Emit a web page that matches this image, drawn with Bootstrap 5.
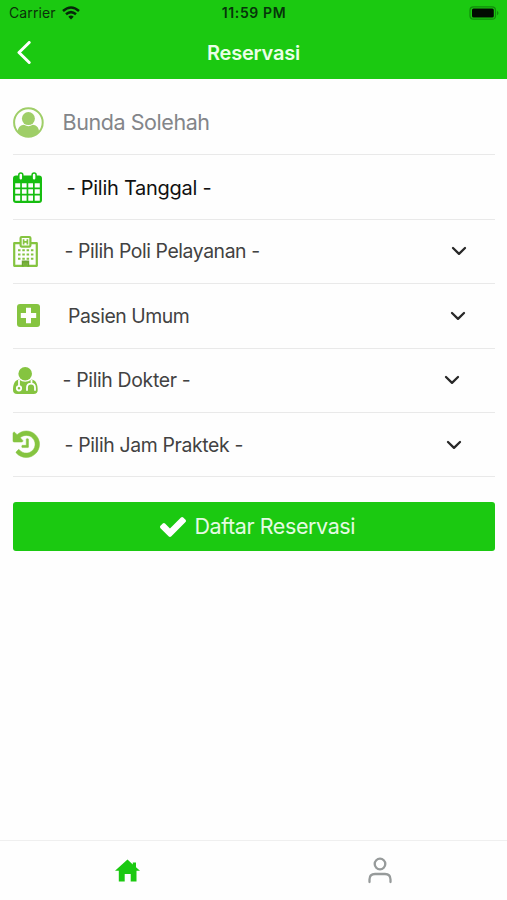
<!DOCTYPE html>
<html lang="id">
<head>
<meta charset="utf-8">
<meta name="viewport" content="width=device-width, initial-scale=1">
<title>Reservasi</title>
<link href="https://cdn.jsdelivr.net/npm/bootstrap@5.3.0/dist/css/bootstrap.min.css" rel="stylesheet">
<style>
:root{--brand:#1bc911;--leaf:#85c440}
body{font-family:Inter,"Liberation Sans",sans-serif;color:#424242;background:#fefefe;line-height:1.2}
svg{display:block;flex:none}
.app-head{background:var(--brand);height:79px}
.status{height:27px;padding:0 8px 1px 9px;font-size:14px;color:#0b300a}
.status>div{flex:1 1 0}
.carrier{letter-spacing:.1px}
.maker{gap:6px}
.clock{font-weight:600;color:#06350a;letter-spacing:.6px}
.title-bar{height:51px;padding:0 17px}
.title-bar>div{flex:1 1 0}
.title-bar h1{font-size:20px;font-weight:600;color:#eaffe8;letter-spacing:-.2px}
.form-rows{padding:12px 12.5px 0 13px}
.line{height:64.4px;border-bottom:1.5px solid #e9e9e9;font-size:19.4px}
.line>span{padding-top:1px}
.ico{width:var(--w)}
.w-a{--w:49.5px}.w-b{--w:53.5px}.w-c{--w:51.5px}.w-d{--w:55px}
.ico svg{overflow:visible}
.name{font-size:21.5px;color:#838589;letter-spacing:-.43px}
.date{font-size:20px;color:#111;letter-spacing:-.27px}
.t1{letter-spacing:-.42px}.t2{letter-spacing:-.45px}.t3{letter-spacing:-.33px}.t4{letter-spacing:-.35px}
.e1{margin-right:27.5px}.e2{margin-right:28.5px}.e3{margin-right:35px}.e4{margin-right:32.5px}
.send{height:48.5px;margin-top:25px;background:var(--brand);color:#e4fbe2;font-size:21.5px;letter-spacing:-.4px;border-radius:3px;border:0;padding:0 0 0 8px;gap:8px}
.send:hover{background:var(--brand);color:#e4fbe2}
.tabs{height:60px;border-top:1px solid #efefef}
</style>
<script src="https://cdn.jsdelivr.net/npm/bootstrap@5.3.0/dist/js/bootstrap.bundle.min.js"></script>
</head>
<body class="d-flex flex-column vh-100 overflow-hidden">
<header class="app-head">
  <div class="status d-flex align-items-center">
    <div class="maker d-flex align-items-center"><span class="carrier">Carrier</span>
      <svg class="wifi" width="18" height="14" viewBox="0 0 18 14" fill="none" stroke="#06280a" stroke-width="2.5"><path d="M1 5Q9-2 17 5M4 8.3Q9 4 14 8.3"/><path d="M6.3 10.7Q9 8.4 11.7 10.7L9 13.6Z" fill="#06280a" stroke="none"/></svg>
    </div>
    <span class="clock">11:59 PM</span>
    <div class="d-flex justify-content-end"><svg width="30" height="14" viewBox="0 0 30 14"><rect x="1" y=".8" width="25.5" height="12.4" rx="3.5" fill="none" stroke="#128b0b" stroke-width="1.2"/><rect x="3" y="2.6" width="21.8" height="8.8" rx="1.5" fill="#020a02"/><path d="M28 4.7Q31 7 28 9.3Z" fill="#128b0b"/></svg></div>
  </div>
  <div class="title-bar d-flex align-items-center">
    <div><svg width="15" height="24" viewBox="0 0 15 24" fill="none" stroke="#fff" stroke-width="3" stroke-linecap="round" stroke-linejoin="round"><path d="M12.2 1.500L2 11.500L12.200 21.500"/></svg></div>
    <h1 class="m-0">Reservasi</h1>
    <div></div>
  </div>
</header>
<main class="form-rows flex-grow-1">
  <div class="line d-flex align-items-center">
    <div class="ico w-a"><svg width="31" height="31" viewBox="0 0 31 31"><circle cx="15.4" cy="15.5" r="14.3" fill="none" stroke="#9fce68" stroke-width="2"/><g fill="#9fce68"><circle cx="15.4" cy="11.6" r="6.5"/><path d="M4.7 24.5C5.2 19.6 8 18.3 11 17.8Q15.4 20.6 19.8 17.8C22.8 18.3 25.6 19.6 26.1 24.5Q22 30 15.4 30T4.7 24.5Z"/></g></svg></div>
    <span class="name">Bunda Solehah</span>
  </div>
  <div class="line d-flex align-items-center">
    <div class="ico w-b"><svg width="29" height="31" viewBox="0 0 29 31"><path d="M3 3.5H26Q29 3.5 29 6.5V28Q29 31 26 31H3Q0 31 0 28V6.5Q0 3.5 3 3.5Z" fill="#16bd10"/><path d="M2.2 11.2H7.2V15.4H2.2ZM8.9 11.2H13.6V15.4H8.9ZM15.3 11.2H20V15.4H15.3ZM21.7 11.2H26.8V15.4H21.7ZM2.2 17.2H7.2V21.8H2.2ZM8.9 17.2H13.6V21.8H8.9ZM15.3 17.2H20V21.8H15.3ZM21.7 17.2H26.8V21.8H21.7ZM2.2 23.6H7.2V28.7H2.2ZM8.9 23.6H13.6V28.7H8.9ZM15.3 23.6H20V28.7H15.3ZM21.7 23.6H26.8V28.7H21.7Z" fill="#fefefe"/><g fill="#fefefe" stroke="#16bd10" stroke-width="1.5"><rect x="5.8" y=".9" width="4" height="7.3" rx="2"/><rect x="19.1" y=".9" width="4" height="7.3" rx="2"/></g></svg></div>
    <span class="date">- Pilih Tanggal -</span>
  </div>
  <div class="line d-flex align-items-center">
    <div class="ico w-c"><svg width="25" height="31" viewBox="0 0 25 31"><g fill="none" stroke="#85c440" stroke-width="2.2"><path d="M7 7.2H1.2V29.8H23.8V7.2H18" stroke-linejoin="round"/><rect x="7.6" y="1" width="9.8" height="9.6" rx="1"/><path d="M10.6 3.2V8.4M14.4 3.2V8.4M10.6 5.8H14.4" stroke-width="1.7"/><path d="M5 14.3H20.5M5 18.5H20.5M5 22.7H20.5" stroke-width="1.9" stroke-dasharray="2.5 1.8"/></g><path d="M8.8 24.4H16.2V30.5H14.3V27.5H10.7V30.5H8.8Z" fill="#6da534"/><path d="M10.4 26.5H14.6V30H10.4Z" fill="#78b33a"/></svg></div>
    <span class="t1">- Pilih Poli Pelayanan -</span>
    <svg class="e1 ms-auto" width="16" height="10" viewBox="0 0 16 10" fill="none" stroke="#282828" stroke-width="2.3" stroke-linecap="round" stroke-linejoin="round"><path d="M2 2L8 7.8L14 2"/></svg>
  </div>
  <div class="line d-flex align-items-center">
    <div class="ico w-d ps-1"><svg width="23" height="23" viewBox="0 0 23 23"><rect width="23" height="23" rx="3" fill="#85c440"/><path d="M9 3.8H14V9H19.2V14H14V19.2H9V14H3.8V9H9Z" fill="#fefefe"/></svg></div>
    <span class="t2">Pasien Umum</span>
    <svg class="e2 ms-auto" width="16" height="10" viewBox="0 0 16 10" fill="none" stroke="#282828" stroke-width="2.3" stroke-linecap="round" stroke-linejoin="round"><path d="M2 2L8 7.8L14 2"/></svg>
  </div>
  <div class="line d-flex align-items-center">
    <div class="ico w-a"><svg width="25" height="27" viewBox="0 0 25 27"><g fill="#85c440"><circle cx="12.2" cy="6.8" r="6.8"/><path d="M6 12.5Q12.2 17 18.5 12.5C23.5 13.3 24.7 18 24.7 23Q24.7 27 20.5 27H4.2Q0 27 0 23C0 18 1.2 13.3 6 12.5Z"/></g><g fill="none" stroke="#fefefe" stroke-width="1.8"><path d="M6 13V19.2M18.5 12.8V16.5M14 23.8V20.5Q14 16.7 18 16.7T22 20.5V23.8"/><circle cx="6" cy="21.3" r="2.2"/></g></svg></div>
    <span class="t3">- Pilih Dokter -</span>
    <svg class="e3 ms-auto" width="16" height="10" viewBox="0 0 16 10" fill="none" stroke="#282828" stroke-width="2.3" stroke-linecap="round" stroke-linejoin="round"><path d="M2 2L8 7.8L14 2"/></svg>
  </div>
  <div class="line d-flex align-items-center">
    <div class="ico w-c"><svg width="26.5" height="26.5" viewBox="128 128 1536 1536" fill="#85c440" stroke="#85c440" stroke-width="30"><path d="M1664 896q0 156-61 298t-164 245-245 164-298 61q-172 0-327-72.5t-264-204.5q-7-10-6.5-22.5t8.5-20.5l137-138q10-9 25-9 16 2 23 12 73 95 179 147t225 52q104 0 198.500-40.500t163.500-109.500 109.500-163.500 40.500-198.500-40.500-198.500-109.500-163.500-163.500-109.500-198.500-40.500q-98 0-188 35.500t-160 101.500l137 138q31 30 14 69-17 40-59 40h-448q-26 0-45-19t-19-45v-448q0-42 40-59 39-17 69 14l130 129q107-101 244.500-156.500t284.500-55.500q156 0 298 61t245 164 164 245 61 298zm-640-288v448q0 14-9 23t-23 9h-320q-14 0-23-9t-9-23v-64q0-14 9-23t23-9h224v-352q0-14 9-23t23-9h64q14 0 23 9t9 23z"/></svg></div>
    <span class="t4">- Pilih Jam Praktek -</span>
    <svg class="e4 ms-auto" width="16" height="10" viewBox="0 0 16 10" fill="none" stroke="#282828" stroke-width="2.3" stroke-linecap="round" stroke-linejoin="round"><path d="M2 2L8 7.8L14 2"/></svg>
  </div>
  <button type="button" class="send btn w-100 d-flex align-items-center justify-content-center">
    <svg width="26" height="20" viewBox="121 334 1550 1188" fill="#fff"><path d="M1671 566q0 40-28 68l-724 724-136 136q-28 28-68 28t-68-28l-136-136-362-362q-28-28-28-68t28-68l136-136q28-28 68-28t68 28l294 295 656-657q28-28 68-28t68 28l136 136q28 28 28 68z"/></svg>
    <span class="send-text">Daftar Reservasi</span>
  </button>
</main>
<nav class="tabs row g-0">
  <div class="col d-flex align-items-center justify-content-center"><svg width="26" height="23" viewBox="-1 0 26 23"><path d="M12.5 .5L17.800 5.400V3.500H21V8.300L25 11.700H21.500V22.500H15.700V15H9.700V22.500H3.800V11.700H0Z" fill="#1bc911"/></svg></div>
  <div class="col d-flex align-items-center justify-content-center"><svg width="24" height="27" viewBox="0 0 24 27" fill="none" stroke="#969a9a" stroke-width="2.300" stroke-linecap="round"><circle cx="12" cy="7" r="5.300"/><path d="M1.500 25V22.500Q1.500 17 7 17H17Q22.500 17 22.500 22.500V25"/></svg></div>
</nav>
</body>
</html>
